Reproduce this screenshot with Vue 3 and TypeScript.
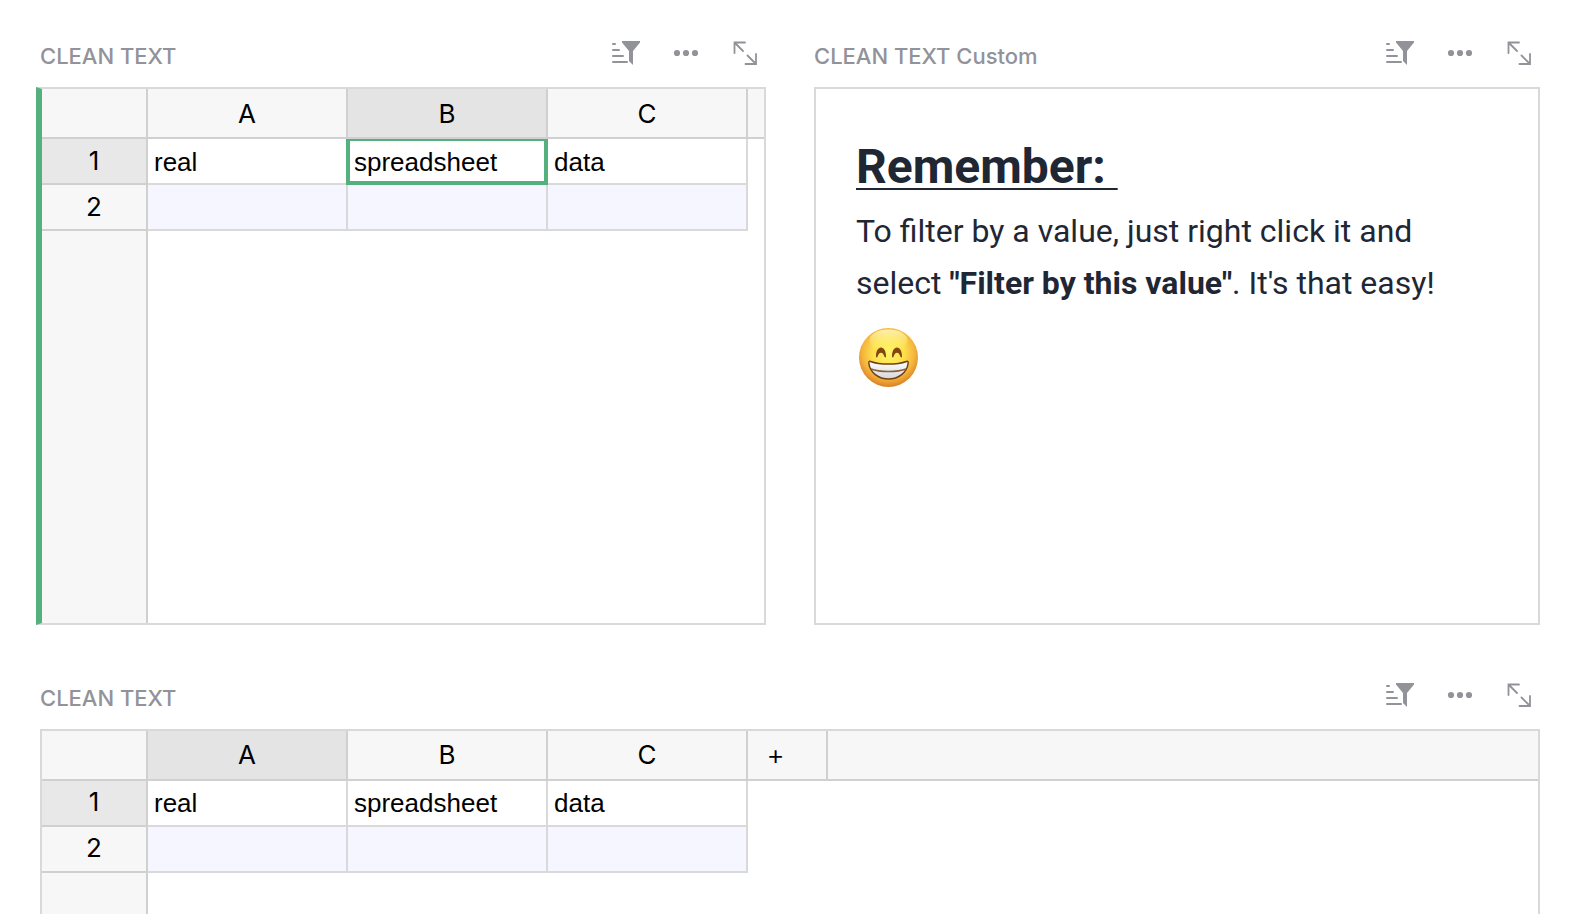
<script setup lang="ts">
interface Grid {
  kind: 'grid'
  id: string
  title: string
  activeColumn: number
  showCursor: boolean
  canAddColumn: boolean
}

interface Note {
  kind: 'note'
  id: string
  title: string
}

const columns: string[] = ['A', 'B', 'C']
const rows: string[][] = [
  ['real', 'spreadsheet', 'data'],
  ['', '', ''],
]

const sections: (Grid | Note)[] = [
  { kind: 'grid', id: 'grid-main', title: 'CLEAN TEXT', activeColumn: 1, showCursor: true, canAddColumn: false },
  { kind: 'note', id: 'note', title: 'CLEAN TEXT Custom' },
  { kind: 'grid', id: 'grid-wide', title: 'CLEAN TEXT', activeColumn: 0, showCursor: false, canAddColumn: true },
]
</script>

<template>
  <main class="page">
    <section
      v-for="section in sections"
      :key="section.id"
      class="section"
      :class="{ wide: section.id === 'grid-wide' }"
      :aria-labelledby="section.id"
    >
      <header class="bar">
        <h2 :id="section.id" class="title">{{ section.title }}</h2>
        <div class="tools">
          <button type="button" class="tool" aria-label="Sort and filter">
            <svg viewBox="0 0 32 32" width="32" height="32" aria-hidden="true">
              <path
                class="line"
                d="M3 7h2M3 13h6M3 19h10M3 25h14"
              />
              <path class="solid" d="M12 4h18v1.500l-7 8.500v14l-4-4v-10l-7-8.500z" />
            </svg>
          </button>
          <button type="button" class="tool" aria-label="More options">
            <svg viewBox="0 0 32 32" width="32" height="32" aria-hidden="true">
              <circle class="solid" cx="7" cy="16" r="3.100" />
              <circle class="solid" cx="16" cy="16" r="3.100" />
              <circle class="solid" cx="25" cy="16" r="3.100" />
            </svg>
          </button>
          <button type="button" class="tool" aria-label="Expand section">
            <svg viewBox="0 0 32 32" width="32" height="32" aria-hidden="true">
              <path
                class="thin"
                d="M15 5.500H4.500V16M4.500 5.500l8.500 8.500M26 17V27H15.500M26 27l-8.500-8.500"
              />
            </svg>
          </button>
        </div>
      </header>

      <div v-if="section.kind === 'grid'" class="panel" :class="{ focused: section.showCursor }">
        <table class="sheet">
          <colgroup>
            <col class="col-number" />
            <col v-for="name in columns" :key="name" class="col-data" />
            <col v-if="section.canAddColumn" class="col-add" />
            <col />
          </colgroup>
          <thead>
            <tr>
              <td class="head"></td>
              <th
                v-for="(name, c) in columns"
                :key="name"
                scope="col"
                class="head"
                :class="{ current: c === section.activeColumn }"
              >{{ name }}</th>
              <td v-if="section.canAddColumn" class="head add-cell">
                <button type="button" class="add" aria-label="Add column">+</button>
              </td>
              <td class="head rest"></td>
            </tr>
          </thead>
          <tbody>
            <tr v-for="(row, r) in rows" :key="r">
              <th scope="row" class="number" :class="{ current: r === 0 }">{{ r + 1 }}</th>
              <td
                v-for="(value, c) in row"
                :key="c"
                class="cell"
                :class="{
                  blank: r === rows.length - 1,
                  cursor: section.showCursor && r === 0 && c === section.activeColumn,
                }"
              >{{ value }}</td>
            </tr>
          </tbody>
        </table>
        <div class="gutter"></div>
      </div>

      <article v-else class="panel note">
        <h1 class="note-title">Remember:&nbsp;</h1>
        <p class="note-text">
          To filter by a value, just right click it and select
          <strong>"Filter by this value"</strong>. It's that easy!
        </p>
        <svg class="face" viewBox="-0.5 -0.5 64 64" role="img" aria-label="Beaming face with smiling eyes">
          <defs>
            <radialGradient id="skin" cx="32" cy="27" r="35" gradientUnits="userSpaceOnUse">
              <stop offset="0" stop-color="#fff568" />
              <stop offset="0.45" stop-color="#fde04c" />
              <stop offset="0.75" stop-color="#f4b43c" />
              <stop offset="1" stop-color="#d97d24" />
            </radialGradient>
            <linearGradient id="shine" x1="0" y1="0" x2="0" y2="1">
              <stop offset="0" stop-color="#fffbd0" stop-opacity="0.8" />
              <stop offset="1" stop-color="#fff56b" stop-opacity="0" />
            </linearGradient>
            <linearGradient id="teeth" x1="0" y1="0" x2="0" y2="1">
              <stop offset="0" stop-color="#ffffff" />
              <stop offset="1" stop-color="#d3d6db" />
            </linearGradient>
          </defs>
          <circle cx="32" cy="32" r="29.500" fill="url(#skin)" />
          <ellipse cx="32" cy="15" rx="19" ry="11" fill="url(#shine)" />
          <path
            fill="#83460f"
            d="M19.500 31c0-5.500 2-9 5-9s5 3.500 5 9c0 1.200-1.200 1.200-1.600 0-.8-2.500-1.800-3.800-3.400-3.800s-2.600 1.300-3.400 3.800c-.4 1.200-1.600 1.200-1.600 0z"
          />
          <path
            fill="#83460f"
            d="M35.500 31c0-5.500 2-9 5-9s5 3.500 5 9c0 1.200-1.200 1.200-1.600 0-.8-2.500-1.800-3.800-3.400-3.800s-2.600 1.300-3.400 3.800c-.4 1.200-1.600 1.200-1.600 0z"
          />
          <path
            fill="url(#teeth)"
            stroke="#70400f"
            stroke-width="1.500"
            stroke-linejoin="round"
            d="M14 36c5.500 2 11 2.600 18 2.600s12.500-.6 18-2.600c1.500-.5 1.800.4 1.600 2-1.200 9-9.400 15.500-19.600 15.500s-18.400-6.500-19.600-15.500c-.2-1.600.1-2.500 1.600-2z"
          />
          <path fill="none" stroke="#8a6038" stroke-width="1.500" d="M14.500 43.500c5 2 11 2.500 17.500 2.500s12.500-.5 17.500-2.500" />
        </svg>
      </article>
    </section>
  </main>
</template>

<style>
body {
  margin: 0;
  background: #ffffff;
}
</style>

<style scoped>
.page {
  box-sizing: border-box;
  display: grid;
  grid-template-columns: repeat(2, minmax(0, 1fr));
  grid-template-rows: 5fr 2fr;
  gap: 54px 48px;
  height: 100vh;
  padding: 37px 32px 0 40px;
  overflow: hidden;
  color: #000000;
  font-family: "Liberation Sans", Arial, sans-serif;
  font-size: 26px;
}

.section {
  display: flex;
  flex-direction: column;
  min-width: 0;
  min-height: 0;
}

.wide {
  grid-column: 1 / -1;
}

.bar {
  display: flex;
  align-items: flex-start;
  justify-content: space-between;
  height: 50px;
  padding-right: 4px;
}

.title {
  margin: 0;
  padding-top: 4px;
  color: #929299;
  font-family: Inter, sans-serif;
  font-size: 22px;
  font-weight: 500;
  line-height: 30px;
}

.tools {
  display: flex;
  gap: 28px;
}

.tool,
.add {
  margin: 0;
  padding: 0;
  border: 0;
  background: none;
  color: inherit;
  font: inherit;
  cursor: pointer;
}

.tool {
  width: 32px;
  height: 32px;
  color: #929299;
}

.tool svg {
  display: block;
}

.solid {
  fill: currentColor;
}

.line,
.thin {
  fill: none;
  stroke: currentColor;
  stroke-width: 2;
  stroke-linecap: round;
}

.thin {
  stroke-width: 1.8;
}

.panel {
  box-sizing: border-box;
  display: flex;
  flex: 1;
  flex-direction: column;
  min-height: 0;
  border: 2px solid #d9d9d9;
}

.wide .panel {
  border-bottom: 0;
}

.focused {
  margin-left: -4px;
  border-left: 6px solid #54b17e;
}

.sheet {
  width: 100%;
  table-layout: fixed;
  border-collapse: separate;
  border-spacing: 0;
}

.col-number {
  width: 106px;
}

.col-data {
  width: 200px;
}

.col-add {
  width: 80px;
}

.head,
.number,
.cell {
  box-sizing: border-box;
  padding: 0;
  border-right: 2px solid #d9d9d9;
  border-bottom: 2px solid #d9d9d9;
  font-weight: 400;
}

.head,
.number {
  border-color: #d0d0d0;
  background: #f7f7f7;
  font-family: Inter, sans-serif;
  text-align: center;
}

.head {
  height: 50px;
}

.number {
  height: 46px;
  padding-bottom: 2px;
}

.head.current {
  background: #e4e4e4;
}

.number.current {
  background: #e8e8e8;
}

.rest {
  border-right: 0;
}

.add-cell {
  padding: 4px 0 0 20px;
  font-family: "Liberation Sans", Arial, sans-serif;
  text-align: left;
}

.cell {
  position: relative;
  height: 46px;
  padding: 2px 0 0 6px;
  overflow: hidden;
  white-space: nowrap;
}

.blank {
  background: #f5f6ff;
}

.cursor {
  overflow: visible;
}

.cursor::after {
  position: absolute;
  inset: 0 -2px -2px;
  border: 4px solid #54b17e;
  border-top-width: 2px;
  content: "";
}

.gutter {
  box-sizing: border-box;
  flex: 1;
  width: 106px;
  border-right: 2px solid #d0d0d0;
  background: #f7f7f7;
}

.note {
  padding: 40px;
  color: #1f2735;
  font-family: Roboto, sans-serif;
}

.note-title {
  margin: 0;
  font-size: 48px;
  font-weight: 700;
  line-height: 76px;
  text-decoration: underline;
  text-decoration-skip-ink: none;
  text-decoration-thickness: 2px;
  text-underline-offset: 5px;
}

.note-text {
  margin: 0;
  font-size: 32px;
  line-height: 52px;
}

.face {
  width: 64px;
  height: 64px;
  margin-top: 16px;
}
</style>
